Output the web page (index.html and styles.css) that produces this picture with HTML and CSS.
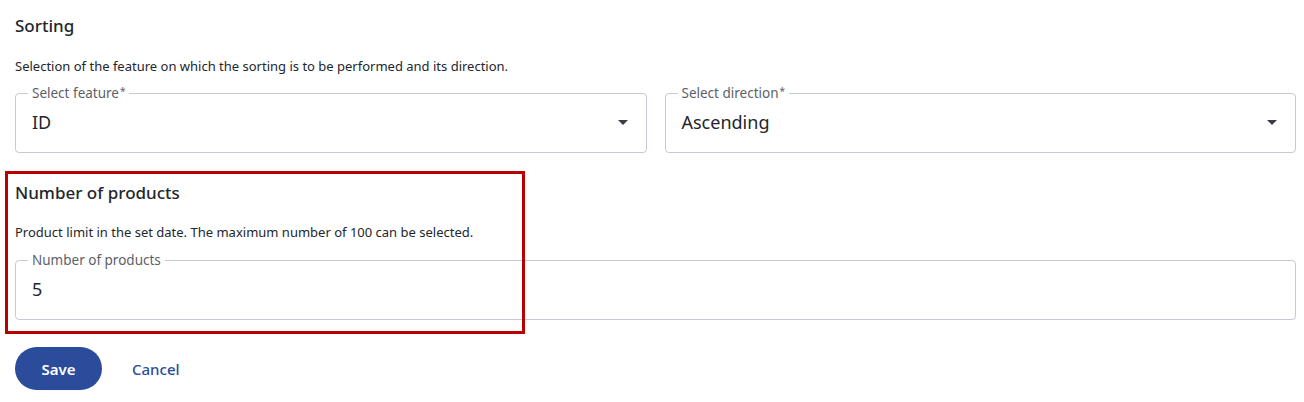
FILE: index.html
```html
<!DOCTYPE html>
<html>
<head>
<meta charset="utf-8">
<link rel="stylesheet" href="styles.css">
</head>
<body>
<div class="page">
  <section class="section">
    <h2 class="title">Sorting</h2>
    <p class="desc">Selection of the feature on which the sorting is to be performed and its direction.</p>
    <div class="row">
      <fieldset class="field">
        <legend>Select feature<span class="req">*</span></legend>
        <div class="value">ID</div>
        <span class="arrow"></span>
      </fieldset>
      <fieldset class="field">
        <legend>Select direction<span class="req">*</span></legend>
        <div class="value">Ascending</div>
        <span class="arrow"></span>
      </fieldset>
    </div>
  </section>
  <section class="section second">
    <h2 class="title">Number of products</h2>
    <p class="desc">Product limit in the set date. The maximum number of 100 can be selected.</p>
    <fieldset class="field">
      <legend>Number of products</legend>
      <div class="value">5</div>
    </fieldset>
  </section>
  <div class="actions">
    <button class="btn-save">Save</button>
    <button class="btn-cancel">Cancel</button>
  </div>
  <div class="highlight"></div>
</div>
</body>
</html>
```

FILE: styles.css
```css
* { box-sizing: border-box; }
html, body { margin: 0; padding: 0; background: #fff; }
body {
  font-family: "Noto Sans", "Open Sans", sans-serif;
  color: #23262d;
}
.page {
  position: relative;
  width: 1304px;
  height: 402px;
  padding: 14px 8px 0 15px;
}
.title {
  margin: 0;
  font-size: 17px;
  font-weight: 500;
  line-height: 24px;
  color: #23262d;
}
.desc {
  margin: 19px 0 0;
  font-size: 13px;
  line-height: 18px;
  color: #23262d;
}
.row {
  display: grid;
  grid-template-columns: 1fr 1fr;
  gap: 18px;
}
.field {
  position: relative;
  margin: 11px 0 0;
  padding: 0 16px;
  height: 67px;
  border: 1px solid #c6c9d8;
  border-radius: 4px;
  min-width: 0;
}
.field legend {
  margin-left: -4px;
  padding: 0 4px;
  font-size: 13.5px;
  line-height: 14px;
  height: 14px;
  color: #5c5f68;
}
.req {
  font-size: 10px;
  line-height: 0;
  vertical-align: 3px;
  margin-left: 1px;
}
.value {
  font-size: 18px;
  line-height: 24px;
  margin-top: 10px;
  color: #23262d;
}
.arrow {
  position: absolute;
  right: 18px;
  top: 20px;
  width: 0;
  height: 0;
  border-left: 5px solid transparent;
  border-right: 5px solid transparent;
  border-top: 5px solid #3a3d44;
}
.second { margin-top: 28px; }
.second .desc { margin-top: 18px; }
.second .field { margin-top: 12px; }
.actions {
  margin-top: 27px;
  display: flex;
  align-items: center;
  gap: 30px;
}
.btn-save {
  width: 87px;
  height: 43px;
  border: none;
  border-radius: 22px;
  background: #2b4c9b;
  color: #fff;
  font-family: inherit;
  font-size: 15px;
  font-weight: 600;
}
.btn-cancel {
  border: none;
  background: none;
  padding: 0;
  color: #2b4c9b;
  font-family: inherit;
  font-size: 15px;
  font-weight: 500;
}
.highlight {
  position: absolute;
  left: 5px;
  top: 171px;
  width: 520px;
  height: 163px;
  border: 3px solid #bb0000;
  pointer-events: none;
}
```
